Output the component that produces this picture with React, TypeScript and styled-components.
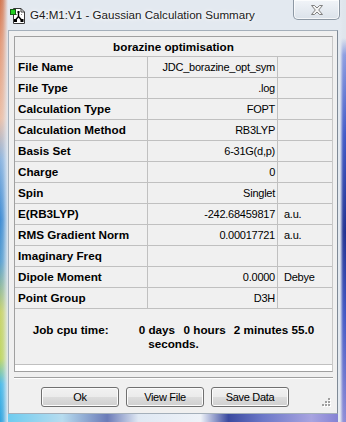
import React from "react";
import styled, { createGlobalStyle } from "styled-components";

const GlobalStyle = createGlobalStyle`
  html, body { margin: 0; padding: 0; background: #ffffff; }
  body { width: 346px; height: 422px; overflow: hidden; }
  * { box-sizing: border-box; }
`;

const FRAME = "#e3e9f0";

const Window = styled.div`
  width: 346px;
  height: 422px;
  display: flex;
  flex-direction: column;
  padding: 0 8px 8px 8px;
  font-family: "Liberation Sans", Arial, sans-serif;
  color: #000;
  background:
    linear-gradient(to right, rgba(227,233,240,0) 0px, rgba(227,233,240,0.2) 3px, rgba(227,233,240,1) 8px) left top / 8px 100% no-repeat,
    linear-gradient(to left, rgba(227,233,240,0) 0px, rgba(227,233,240,0.1) 3px, rgba(227,233,240,1) 6px) right top / 8px 100% no-repeat,
    linear-gradient(to bottom, #d3764e 0%, #e39a79 10%, #ecc0a8 28%, #8ab4e0 38%, #3d8bd3 52%, #5aa0d0 62%, #c9d46c 74%, #bfd765 85%, #4cbbe9 91%, #2fa3df 100%) left top / 8px 100% no-repeat,
    linear-gradient(to bottom, #dfe5ec 0%, #dfe5ec 9%, #8a9be0 13%, #3d56c6 32%, #1d2e8f 55%, #3f55c4 75%, #8c8ad6 100%) right top / 8px 100% no-repeat,
    linear-gradient(to right, #63c9ef 0%, #b7dcef 18%, #6b7bb8 31%, #dfe8f3 40%, #eef2f8 58%, #3a4aa0 66%, #6c78c8 76%, #a8a4e0 90%, #7a78d0 100%) left bottom / 100% 8px no-repeat,
    ${FRAME};
`;

const TitleBar = styled.div`
  height: 30px;
  flex-shrink: 0;
  display: flex;
  align-items: flex-start;
`;

const AppIcon = styled.svg`
  width: 16px;
  height: 16px;
  margin: 8px 0 0 2px;
  flex-shrink: 0;
`;

const TitleText = styled.div`
  margin: 8px 0 0 4px;
  font-size: 11.6px;
  line-height: 14px;
  white-space: nowrap;
  color: #1a1a1a;
  text-shadow: 0 0 6px #fff, 0 0 3px #fff;
`;

const CloseButton = styled.div`
  margin-left: auto;
  margin-right: -2px;
  width: 47px;
  height: 20px;
  border: 1px solid #8d98a4;
  border-top: none;
  border-radius: 0 0 5px 5px;
  background: linear-gradient(to bottom, #f1f4f8 0%, #e6ebf1 50%, #dbe2ea 100%);
  box-shadow: inset 0 0 0 1px rgba(255, 255, 255, 0.7);
  display: flex;
  align-items: center;
  justify-content: center;
`;

const Client = styled.div`
  flex: 1;
  display: flex;
  flex-direction: column;
  border: 1px solid #a4afba;
  border-right-color: #7f8a96;
  background: #f0f0f0;
  padding: 5px 4px 0 5px;
`;

const Panel = styled.div`
  height: 336px;
  flex-shrink: 0;
  display: flex;
  flex-direction: column;
  border: 1px solid;
  border-color: #a0a0a0 #c8c8c8 #a0a0a0 #a0a0a0;
  background: #ffffff;
`;

const Table = styled.div`
  background: #f0f0f0;
`;

const HeaderRow = styled.div`
  height: 20px;
  border-bottom: 1px solid #c0c0c0;
  text-align: center;
  font-weight: bold;
  font-size: 11.7px;
  line-height: 19px;
`;

const Row = styled.div`
  display: grid;
  grid-template-columns: 133px 130px 54px;
  height: 21px;
  border-bottom: 1px solid #c0c0c0;
`;

const Label = styled.div`
  border-right: 1px solid #c0c0c0;
  padding-left: 3px;
  font-weight: bold;
  font-size: 11.7px;
  line-height: 20px;
  white-space: nowrap;
  overflow: hidden;
`;

const Value = styled.div`
  border-right: 1px solid #c0c0c0;
  padding-right: 2px;
  text-align: right;
  font-size: 11px;
  letter-spacing: -0.25px;
  line-height: 20px;
  white-space: nowrap;
`;

const Unit = styled.div`
  padding-left: 6px;
  font-size: 11px;
  letter-spacing: -0.25px;
  line-height: 20px;
  white-space: nowrap;
`;

const JobRow = styled.div`
  height: 56px;
  border-bottom: 1px solid #c0c0c0;
  display: flex;
  flex-direction: column;
  align-items: center;
  justify-content: center;
  font-weight: bold;
  font-size: 11.7px;
  line-height: 13.5px;
`;

const JobLine = styled.div`
  white-space: nowrap;
  text-align: center;
`;

const Seg = styled.span<{ $gap?: number }>`
  margin-left: ${(p) => p.$gap ?? 0}px;
`;

const Separator = styled.div`
  margin-top: 5px;
  height: 2px;
  flex-shrink: 0;
  border-top: 1px solid #a0a0a0;
  border-bottom: 1px solid #ffffff;
`;

const ButtonRow = styled.div`
  margin-top: 8px;
  padding-left: 27px;
  display: flex;
  gap: 7px;
`;

const Button = styled.button`
  width: 78px;
  height: 20px;
  padding: 0;
  border: 1px solid #707070;
  border-radius: 3px;
  background: linear-gradient(to bottom, #f2f2f2 0%, #ebebeb 50%, #dddddd 50%, #cfcfcf 100%);
  box-shadow: inset 0 0 0 1px #fcfcfc;
  font-family: "Liberation Sans", Arial, sans-serif;
  font-size: 11px;
  letter-spacing: -0.3px;
  color: #000;
  line-height: 18px;
`;

const Grip = styled.svg`
  width: 9px;
  height: 9px;
  margin-left: auto;
  margin-right: 2px;
  align-self: flex-end;
`;

type Item = { label: string; value: string; unit?: string };

const items: Item[] = [
  { label: "File Name", value: "JDC_borazine_opt_sym" },
  { label: "File Type", value: ".log" },
  { label: "Calculation Type", value: "FOPT" },
  { label: "Calculation Method", value: "RB3LYP" },
  { label: "Basis Set", value: "6-31G(d,p)" },
  { label: "Charge", value: "0" },
  { label: "Spin", value: "Singlet" },
  { label: "E(RB3LYP)", value: "-242.68459817", unit: "a.u." },
  { label: "RMS Gradient Norm", value: "0.00017721", unit: "a.u." },
  { label: "Imaginary Freq", value: "" },
  { label: "Dipole Moment", value: "0.0000", unit: "Debye" },
  { label: "Point Group", value: "D3H" },
];

export default function App() {
  return (
    <>
      <GlobalStyle />
      <Window>
        <TitleBar>
          <AppIcon viewBox="0 0 16 16">
            <path d="M3.5 0.5 H11 L14.5 4 V15.5 H3.5 Z" fill="#ffffff" stroke="#3a3a3a" />
            <path d="M11 0.5 V4 H14.5" fill="none" stroke="#3a3a3a" />
            <rect x="0.5" y="1.5" width="5" height="5" fill="#22d022" stroke="#145a14" />
            <path d="M8.5 4.5 V8.5 L5.5 12 M8.5 8.5 L11.5 12" stroke="#000" strokeWidth="1.4" fill="none" />
            <rect x="7.5" y="3" width="2" height="2" fill="#000" />
            <rect x="4" y="11" width="3" height="3" fill="#000" />
            <rect x="10.5" y="11" width="3" height="3" fill="#000" />
            <rect x="6" y="6" width="1" height="1" fill="#888" />
            <rect x="11" y="6" width="1" height="1" fill="#888" />
          </AppIcon>
          <TitleText>G4:M1:V1 - Gaussian Calculation Summary</TitleText>
          <CloseButton>
            <svg width="14" height="10" viewBox="0 0 14 10">
              <path
                d="M1.5 0.5 H4.5 L7 3 L9.5 0.5 H12.5 L8.7 5 L12.5 9.5 H9.5 L7 7 L4.5 9.5 H1.5 L5.3 5 Z"
                fill="#f4f4f4"
                stroke="#808080"
                strokeWidth="1"
              />
            </svg>
          </CloseButton>
        </TitleBar>
        <Client>
          <Panel>
            <Table>
              <HeaderRow>borazine optimisation</HeaderRow>
              {items.map((it) => (
                <Row key={it.label}>
                  <Label>{it.label}</Label>
                  <Value>{it.value}</Value>
                  <Unit>{it.unit ?? ""}</Unit>
                </Row>
              ))}
              <JobRow>
                <JobLine>
                  <Seg>Job cpu time:</Seg>
                  <Seg $gap={30}>0 days</Seg>
                  <Seg $gap={8.5}>0 hours</Seg>
                  <Seg $gap={8}>2 minutes 55.0</Seg>
                </JobLine>
                <JobLine>seconds.</JobLine>
              </JobRow>
            </Table>
          </Panel>
          <Separator />
          <ButtonRow>
            <Button>Ok</Button>
            <Button>View File</Button>
            <Button>Save Data</Button>
            <Grip viewBox="0 0 9 9">
              <rect x="7" y="1" width="2" height="2" fill="#fff" />
              <rect x="4" y="4" width="2" height="2" fill="#fff" />
              <rect x="7" y="4" width="2" height="2" fill="#fff" />
              <rect x="1" y="7" width="2" height="2" fill="#fff" />
              <rect x="4" y="7" width="2" height="2" fill="#fff" />
              <rect x="7" y="7" width="2" height="2" fill="#fff" />
              <rect x="6" y="0" width="2" height="2" fill="#a0a0a0" />
              <rect x="3" y="3" width="2" height="2" fill="#a0a0a0" />
              <rect x="6" y="3" width="2" height="2" fill="#a0a0a0" />
              <rect x="0" y="6" width="2" height="2" fill="#a0a0a0" />
              <rect x="3" y="6" width="2" height="2" fill="#a0a0a0" />
              <rect x="6" y="6" width="2" height="2" fill="#a0a0a0" />
            </Grip>
          </ButtonRow>
        </Client>
      </Window>
    </>
  );
}
